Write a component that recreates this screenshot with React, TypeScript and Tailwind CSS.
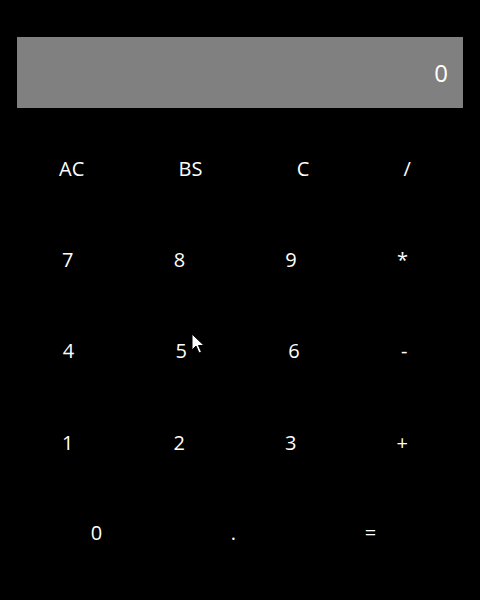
import React, { useState } from 'react';

const rows: string[][] = [
  ['AC', 'BS', 'C', '/'],
  ['7', '8', '9', '*'],
  ['4', '5', '6', '-'],
  ['1', '2', '3', '+'],
];

const Cursor = () => (
  <svg
    className="absolute left-[191px] top-[333px] pointer-events-none"
    width="14"
    height="22"
    viewBox="0 0 14 22"
  >
    <path d="M1 1 L1 17 L5 13 L8 20 L10.5 19 L7.5 12.5 L13 12.5 Z" fill="#fff" stroke="#000" strokeWidth="1" />
  </svg>
);

const App = () => {
  const [value, setValue] = useState('0');

  const press = (key: string) => {
    if (key === 'AC' || key === 'C') return setValue('0');
    if (key === 'BS') return setValue(v => (v.length > 1 ? v.slice(0, -1) : '0'));
    if (key === '=') {
      try {
        // eslint-disable-next-line no-new-func
        setValue(String(Function(`return (${value})`)()));
      } catch {
        setValue('Error');
      }
      return;
    }
    setValue(v => (v === '0' && key !== '.' ? key : v + key));
  };

  return (
    <div className="relative w-[480px] h-[600px] bg-black text-white font-['Open_Sans','Noto_Sans',sans-serif]">
      <div className="pt-[37px] px-[17px]">
        <div className="h-[71px] bg-[#808080] flex items-center justify-end pr-[15px] text-[24px]">
          {value}
        </div>
      </div>

      <div className="mt-[15px] pl-[12px] pr-[22px]">
        {rows.map((row, i) => (
          <div key={i} className={i === 3 ? 'flex h-[93px]' : 'flex h-[91px]'}>
            {row.map(k => (
              <button
                key={k}
                onClick={() => press(k)}
                className="flex-auto flex items-center justify-center text-[20px] bg-transparent"
              >
                {k}
              </button>
            ))}
          </div>
        ))}
        <div className="ml-[16px] w-[411px] grid grid-cols-3 h-[88px]">
          {['0', '.', '='].map(k => (
            <button
              key={k}
              onClick={() => press(k)}
              className="flex items-center justify-center text-[20px] bg-transparent"
            >
              {k}
            </button>
          ))}
        </div>
      </div>

      <Cursor />
    </div>
  );
};

export default App;
